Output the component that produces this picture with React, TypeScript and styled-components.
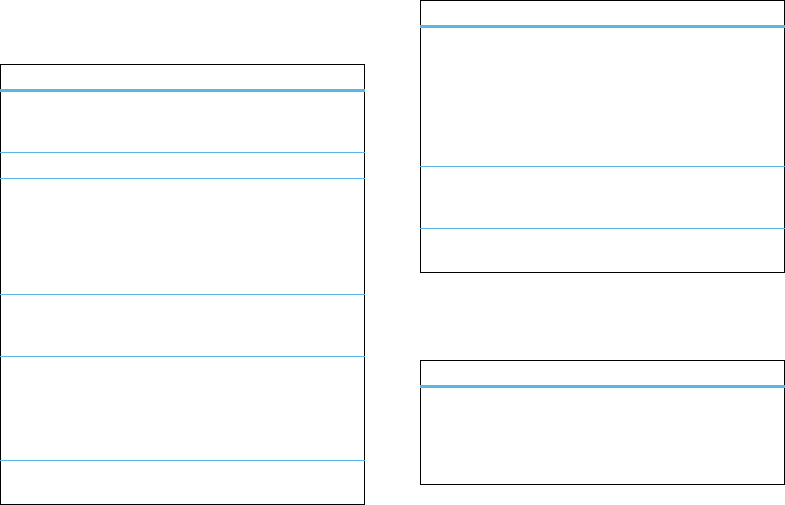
import React from 'react'
import styled, { createGlobalStyle } from 'styled-components'

const BLUE = '#59b6e7'

const GlobalStyle = createGlobalStyle`
  html, body {
    margin: 0;
    padding: 0;
    background: #ffffff;
    font-family: 'Liberation Sans', Arial, sans-serif;
  }
`

type Table = { rows: number[] }

const leftTable: Table = { rows: [60, 25, 115, 61, 103, 43] }
const rightTables: Table[] = [{ rows: [138, 61, 43] }, { rows: [96] }]

function SpecTable({ rows }: Table) {
  return (
    <s.Table>
      <s.Row $height={24} />
      <s.Rule $thick />
      {rows.map((h, i) => (
        <React.Fragment key={i}>
          <s.Row $height={h} />
          {i < rows.length - 1 && <s.Rule />}
        </React.Fragment>
      ))}
    </s.Table>
  )
}

export default function App() {
  return (
    <s.Page>
      <GlobalStyle />
      <s.LeftColumn>
        <SpecTable rows={leftTable.rows} />
      </s.LeftColumn>
      <s.RightColumn>
        {rightTables.map((t, i) => (
          <SpecTable key={i} rows={t.rows} />
        ))}
      </s.RightColumn>
    </s.Page>
  )
}

const s = {
  Page: styled.div`
    width: 785px;
    height: 505px;
    display: grid;
    grid-template-columns: 365px 365px;
    column-gap: 55px;
    overflow: hidden;
  `,

  LeftColumn: styled.div`
    padding-top: 64px;
  `,

  RightColumn: styled.div`
    display: flex;
    flex-direction: column;
    gap: 87px;
  `,

  Table: styled.div`
    display: flex;
    flex-direction: column;
    border-top: 1px solid #000;
    border-bottom: 1px solid #000;
  `,

  Row: styled.div<{ $height: number }>`
    height: ${p => p.$height}px;
    border-left: 1px solid #000;
    border-right: 1px solid #000;
  `,

  Rule: styled.div<{ $thick?: boolean }>`
    height: ${p => (p.$thick ? 3 : 1)}px;
    background: ${BLUE};
  `
}
